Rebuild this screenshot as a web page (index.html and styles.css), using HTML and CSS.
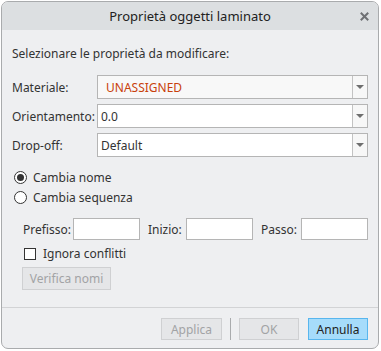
FILE: index.html
```html
<!DOCTYPE html>
<html>
<head>
	<title>Proprietà oggetti laminato</title>
	<link rel="stylesheet" href="styles.css">
</head>
<body>
	<div class="dialog">
		<div class="titlebar">
			<span></span>
			<span class="title">Proprietà oggetti laminato</span>
			<span class="close">
				<svg width="9" height="9" viewBox="0 0 9 9"><path d="M1.5 1.5 L7.5 7.5 M7.5 1.5 L1.5 7.5" stroke="#6f7174" stroke-width="2" stroke-linecap="square"/></svg>
			</span>
		</div>

		<div class="content">
			<p class="intro">Selezionare le proprietà da modificare:</p>

			<div class="form">
				<label>Materiale:</label>
				<div class="combo material">
					<span class="value">UNASSIGNED</span>
					<span class="arrow"></span>
				</div>

				<label>Orientamento:</label>
				<div class="combo">
					<span class="value">0.0</span>
					<span class="arrow"></span>
				</div>

				<label>Drop-off:</label>
				<div class="combo">
					<span class="value">Default</span>
					<span class="arrow"></span>
				</div>
			</div>

			<div class="radios">
				<div class="radio checked"><span class="dot"></span>Cambia nome</div>
				<div class="radio"><span class="dot"></span>Cambia sequenza</div>
			</div>

			<div class="fields">
				<label class="l1">Prefisso:</label>
				<span class="input"></span>
				<label class="l2">Inizio:</label>
				<span class="input"></span>
				<label class="l3">Passo:</label>
				<span class="input last"></span>
			</div>

			<div class="check"><span class="box"></span>Ignora conflitti</div>

			<button class="btn verify" disabled>Verifica nomi</button>
		</div>

		<div class="footer">
			<button class="btn apply" disabled>Applica</button>
			<span class="vsep"></span>
			<button class="btn ok" disabled>OK</button>
			<button class="btn cancel">Annulla</button>
		</div>
	</div>
</body>
</html>
```

FILE: styles.css
```css
body {
	margin: 0;
	background: #ffffff;
	font-family: "Noto Sans", "Open Sans", sans-serif;
	font-size: 12px;
	color: #333333;
}

.dialog {
	margin: 1px;
	width: 378px;
	height: 348px;
	box-sizing: border-box;
	border: 1px solid #a9abad;
	border-radius: 7px;
	background: #eeeff1;
	display: flex;
	flex-direction: column;
	overflow: hidden;
}

.titlebar {
	height: 28px;
	flex: none;
	background: #dcdfe1;
	display: grid;
	grid-template-columns: 1fr auto 1fr;
	align-items: center;
}

.title {
	font-size: 13px;
	color: #222222;
}

.close {
	justify-self: end;
	margin-right: 9px;
	display: flex;
}

.content {
	flex: 1;
	padding: 0 10px;
}

.intro {
	margin: 16px 0 0 0;
	line-height: 16px;
}

.form {
	margin-top: 13px;
	display: grid;
	grid-template-columns: 85px 1fr;
	grid-auto-rows: 24px;
	row-gap: 5px;
	align-items: center;
}

.combo {
	height: 24px;
	box-sizing: border-box;
	border: 1px solid #b5b5b5;
	background: #ffffff;
	display: flex;
	align-items: center;
}

.combo .value {
	flex: 1;
	padding-left: 3px;
}

.combo.material {
	background: #f8f8f8;
}

.combo.material .value {
	padding-left: 8px;
	color: #c8410b;
}

.combo .arrow {
	width: 14px;
	height: 100%;
	border-left: 1px solid #c3c3c3;
	display: flex;
	align-items: center;
	justify-content: center;
	background: #f7f7f7;
}

.combo .arrow::after {
	content: "";
	border-left: 4px solid transparent;
	border-right: 4px solid transparent;
	border-top: 4px solid #6e6e6e;
}

.radios {
	margin-top: 10px;
}

.radio {
	height: 20px;
	display: flex;
	align-items: center;
	margin-left: 2px;
}

.radio .dot {
	width: 13px;
	height: 13px;
	box-sizing: border-box;
	border: 1px solid #333333;
	border-radius: 50%;
	background: #ffffff;
	margin-right: 6px;
	display: flex;
	align-items: center;
	justify-content: center;
}

.radio.checked .dot::after {
	content: "";
	width: 7px;
	height: 7px;
	border-radius: 50%;
	background: #333333;
}

.fields {
	margin-top: 11px;
	padding-left: 11px;
	height: 22px;
	display: flex;
	align-items: center;
}

.fields label.l1 { width: 50px; }
.fields label.l2 { width: 38px; }
.fields label.l3 { width: 40px; }

.input {
	width: 67px;
	height: 22px;
	box-sizing: border-box;
	border: 1px solid #b5b5b5;
	background: #ffffff;
	margin-right: 8px;
}

.input.last {
	margin-right: 0;
}

.check {
	margin-top: 5px;
	margin-left: 12px;
	height: 17px;
	display: flex;
	align-items: center;
}

.check .box {
	width: 12px;
	height: 12px;
	box-sizing: border-box;
	border: 1px solid #333333;
	background: #ffffff;
	margin-right: 7px;
}

.btn {
	font-family: inherit;
	font-size: 12px;
	box-sizing: border-box;
	border: 1px solid #cfd0d2;
	background: #e5e6e8;
	color: #a2a3a5;
	padding: 0;
	margin: 0;
}

.verify {
	margin-top: 5px;
	margin-left: 10px;
	width: 89px;
	height: 23px;
}

.footer {
	flex: none;
	height: 41px;
	border-top: 1px solid #d2d3d5;
	display: flex;
	justify-content: flex-end;
	align-items: flex-start;
	padding: 10px 10px 0 0;
	box-sizing: border-box;
}

.footer .btn {
	height: 22px;
	width: 60px;
}

.footer .apply {
	width: 61px;
}

.vsep {
	width: 1px;
	height: 22px;
	background: #a9abad;
	margin: 0 8px;
}

.footer .cancel {
	margin-left: 9px;
	background: #a6dcfb;
	border-color: #58b6ee;
	color: #222222;
}
```
